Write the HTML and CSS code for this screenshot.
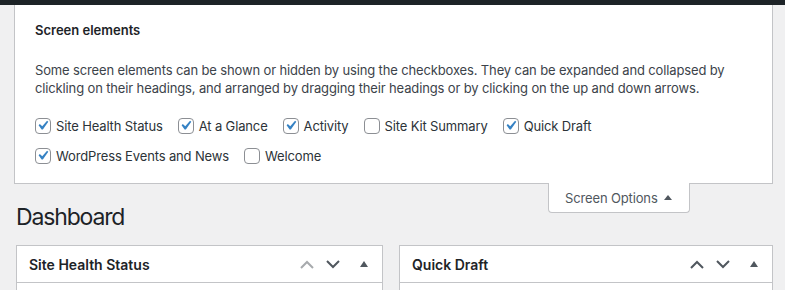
FILE: index.html
```html
<!DOCTYPE html>
<html lang="en">
<head>
<meta charset="utf-8">
<title>Dashboard</title>
<link rel="stylesheet" href="styles.css">
</head>
<body>
<div class="adminbar"></div>
<div class="screen-meta">
  <div class="panel">
    <h5 class="panel-title">Screen elements</h5>
    <p class="panel-desc">Some screen elements can be shown or hidden by using the checkboxes. They can be expanded and collapsed by clickling on their headings, and arranged by dragging their headings or by clicking on the up and down arrows.</p>
    <div class="prefs">
      <label class="pref"><span class="cb"><svg viewBox="3 3 15 15" width="14" height="14"><path d="M14.83 4.89l1.34.94-5.81 8.38H9.02L5.78 9.670l1.34-1.25 2.57 2.4z"/></svg></span>Site Health Status</label>
      <label class="pref"><span class="cb"><svg viewBox="3 3 15 15" width="14" height="14"><path d="M14.83 4.89l1.34.94-5.81 8.38H9.02L5.78 9.670l1.34-1.25 2.57 2.4z"/></svg></span>At a Glance</label>
      <label class="pref"><span class="cb"><svg viewBox="3 3 15 15" width="14" height="14"><path d="M14.83 4.89l1.34.94-5.81 8.38H9.02L5.78 9.670l1.34-1.25 2.57 2.4z"/></svg></span>Activity</label>
      <label class="pref"><span class="cb"></span>Site Kit Summary</label>
      <label class="pref"><span class="cb"><svg viewBox="3 3 15 15" width="14" height="14"><path d="M14.83 4.89l1.34.94-5.81 8.38H9.02L5.78 9.670l1.34-1.25 2.57 2.4z"/></svg></span>Quick Draft</label>
      <label class="pref"><span class="cb"><svg viewBox="3 3 15 15" width="14" height="14"><path d="M14.83 4.89l1.34.94-5.81 8.38H9.02L5.78 9.670l1.34-1.25 2.57 2.4z"/></svg></span>WordPress Events and News</label>
      <label class="pref"><span class="cb"></span>Welcome</label>
    </div>
  </div>
  <button class="tab" type="button">Screen Options<svg class="tab-arrow" viewBox="0 0 8 5" width="8" height="5"><polygon points="0,5 4,0 8,5"/></svg></button>
</div>
<div class="wrap">
  <h1 class="page-title">Dashboard</h1>
  <div class="widgets">
    <div class="postbox">
      <div class="postbox-header">
        <h2 class="hndle">Site Health Status</h2>
        <div class="handle-actions">
          <span class="hbtn order disabled"><svg viewBox="0 0 14 9" width="14" height="9"><polyline points="1,8 7,2 13,8"/></svg></span>
          <span class="hbtn order"><svg viewBox="0 0 14 9" width="14" height="9"><polyline points="1,1 7,7 13,1"/></svg></span>
          <span class="hbtn toggle"><svg viewBox="0 0 8 6" width="8" height="6"><polygon points="0,6 4,0 8,6"/></svg></span>
        </div>
      </div>
      <div class="inside"></div>
    </div>
    <div class="postbox">
      <div class="postbox-header">
        <h2 class="hndle">Quick Draft</h2>
        <div class="handle-actions">
          <span class="hbtn order"><svg viewBox="0 0 14 9" width="14" height="9"><polyline points="1,8 7,2 13,8"/></svg></span>
          <span class="hbtn order"><svg viewBox="0 0 14 9" width="14" height="9"><polyline points="1,1 7,7 13,1"/></svg></span>
          <span class="hbtn toggle"><svg viewBox="0 0 8 6" width="8" height="6"><polygon points="0,6 4,0 8,6"/></svg></span>
        </div>
      </div>
      <div class="inside"></div>
    </div>
  </div>
</div>
</body>
</html>
```
FILE: styles.css
```css
* { box-sizing: border-box; }
html, body { margin: 0; padding: 0; }
body {
  background: #f0f0f1;
  color: #3c434a;
  font-family: Inter, "Liberation Sans", Arial, sans-serif;
  font-size: 13px;
  letter-spacing: -0.14px;
  overflow: hidden;
}
.adminbar { height: 5px; background: #1d2327; }

.screen-meta { margin: 0 12px 0 14px; }
.panel {
  background: #fff;
  border: 1px solid #c3c4c7;
  border-top: 0;
  padding: 16px 20px 12px 20px;
}
.panel-title {
  margin: 0;
  font-size: 13px;
  font-weight: 600;
  line-height: 18px;
  letter-spacing: 0;
  color: #1d2327;
}
.panel-desc {
  margin: 22px 0 0;
  line-height: 18px;
}
.prefs {
  margin-top: 14px;
  display: flex;
  flex-wrap: wrap;
  column-gap: 15px;
}
.pref {
  display: flex;
  align-items: center;
  gap: 5px;
  height: 30px;
  color: #2c3338;
}
.cb {
  width: 16px;
  height: 16px;
  border: 1px solid #8c8f94;
  border-radius: 4px;
  background: #fff;
  display: flex;
  align-items: center;
  justify-content: center;
}
.cb svg { fill: #3582c4; display: block; }

.tab {
  float: right;
  margin: -1px 83px 0 0;
  width: 142px;
  height: 30px;
  padding: 0 0 0 16px;
  display: flex;
  align-items: center;
  gap: 6px;
  background: #fff;
  border: 1px solid #c3c4c7;
  border-top: 0;
  border-radius: 0 0 4px 4px;
  font-family: inherit;
  font-size: 13px;
  letter-spacing: -0.14px;
  color: #50575e;
}
.tab-arrow { fill: #50575e; display: block; margin-top: -1px; }

.wrap { padding: 0 12px 0 16px; }
.page-title {
  margin: 0;
  padding-top: 18px;
  font-size: 23px;
  font-weight: 400;
  line-height: 30px;
  letter-spacing: -0.05em;
  color: #1d2327;
}
.widgets {
  margin-top: 13px;
  display: grid;
  grid-template-columns: 367px 374px;
  column-gap: 16px;
}
.postbox {
  background: #fff;
  border: 1px solid #c3c4c7;
}
.postbox-header {
  height: 37px;
  border-bottom: 1px solid #c3c4c7;
  display: flex;
  align-items: center;
  justify-content: space-between;
}
.hndle {
  margin: 0;
  padding: 0 12px;
  font-size: 14px;
  font-weight: 600;
  letter-spacing: 0;
  color: #1d2327;
}
.handle-actions { display: flex; height: 36px; }
.hbtn {
  display: flex;
  align-items: center;
  justify-content: center;
  height: 36px;
}
.hbtn.order { width: 26px; }
.hbtn.toggle { width: 36px; }
.hbtn.order svg { fill: none; stroke: #50575e; stroke-width: 2; display: block; }
.hbtn.order.disabled svg { stroke: #a7aaad; }
.hbtn.toggle svg { fill: #50575e; display: block; }
.inside { height: 120px; }
```
